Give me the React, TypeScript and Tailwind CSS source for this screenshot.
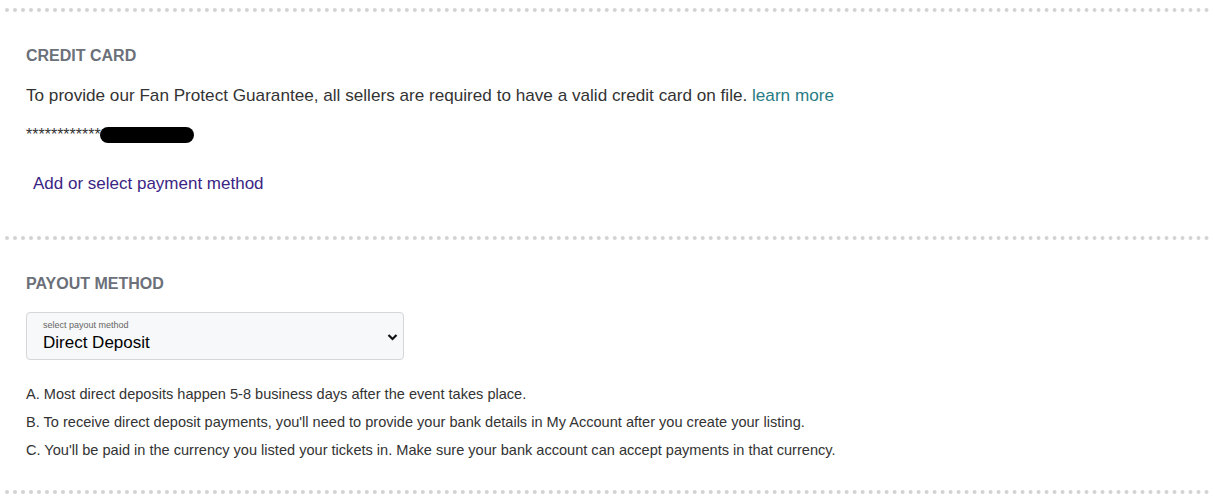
import React from "react";

export default function App() {
  return (
    <div
      className="w-[1215px] h-[497px] bg-white px-[5px] pt-[8px] overflow-hidden"
      style={{ fontFamily: '"Liberation Sans", Arial, sans-serif' }}
    >
      <section className="border-t-4 border-dotted border-[#d3d3d6] pt-[32px] pb-[40px] px-[21px]">
        <h2 className="text-[16px] leading-[24px] font-bold text-[#6b7079]">CREDIT CARD</h2>
        <p className="mt-[15px] text-[17.15px] leading-[24px] text-[#333]">
          To provide our Fan Protect Guarantee, all sellers are required to have a valid credit card on file.{" "}
          <a className="text-[#287c84]">learn more</a>
        </p>
        <div className="mt-[16px] flex items-center h-[24px] text-[16px] text-[#333]">
          <span className="leading-[24px]">************</span>
          <span className="ml-[-1px] inline-block w-[94px] h-[16px] rounded-full bg-black"></span>
        </div>
        <div className="mt-[25px] pl-[7px] text-[17px] leading-[24px] text-[#3b2584]">
          Add or select payment method
        </div>
      </section>
      <section className="border-t-4 border-dotted border-[#d3d3d6] pt-[32px] pb-[26px] px-[21px]">
        <h2 className="text-[16px] leading-[24px] font-bold text-[#6b7079]">PAYOUT METHOD</h2>
        <div className="mt-[16px] w-[378px] h-[48px] border border-[#d4d6da] rounded-[4px] bg-[#f7f8f9] relative pl-[16px]">
          <div className="pt-[7px] text-[9px] leading-[11px] text-[#666]">select payout method</div>
          <div className="mt-[1px] text-[17px] leading-[22px] text-black">Direct Deposit</div>
          <svg
            className="absolute right-[5px] top-[20px]"
            width="11"
            height="8"
            viewBox="0 0 11 8"
          >
            <path d="M1.5 2 L5.5 6 L9.5 2" fill="none" stroke="#111" strokeWidth="2.2" />
          </svg>
        </div>
        <ul className="mt-[20px] text-[14.57px] leading-[28px] text-[#333]">
          <li>A. Most direct deposits happen 5-8 business days after the event takes place.</li>
          <li>B. To receive direct deposit payments, you'll need to provide your bank details in My Account after you create your listing.</li>
          <li>C. You'll be paid in the currency you listed your tickets in. Make sure your bank account can accept payments in that currency.</li>
        </ul>
      </section>
      <div className="border-t-4 border-dotted border-[#d3d3d6]"></div>
    </div>
  );
}
